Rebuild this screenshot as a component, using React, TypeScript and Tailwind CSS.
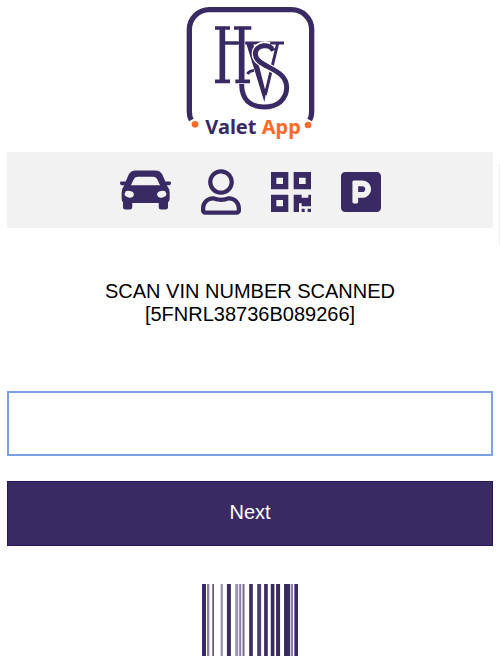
import { FaRegUser, FaParking } from "react-icons/fa";

const bars = [
  [35, 12, 1], [50, 7, 0.6], [66, 5, 0.8], [91, 7, 0.5], [110, 12, 1],
  [135, 9, 0.5], [147, 6, 0.6], [157, 6, 0.7], [177, 11, 1], [201, 12, 0.9],
  [222, 11, 1], [242, 11, 1], [258, 12, 1], [282, 18, 1], [302, 7, 0.6], [313, 11, 1],
];

function Logo() {
  return (
    <svg viewBox="0 0 420 435" className="h-[145px] w-[140px]" role="img" aria-label="HVS Valet App">
      <g fill="none" stroke="#3a2a63">
        <path strokeWidth="16" d="M34 360Q28 350 28 335V88A60 60 0 0 1 88 29H335A60 60 0 0 1 395 88V335Q395 350 389 360" />
        <path strokeWidth="9" d="M293 130L256 285" />
        <path strokeWidth="9" d="M135 129H312" />
        <path fill="#3a2a63" stroke="none" d="M198 128H219L255 268L262 258L253 306Z" />
        <path strokeWidth="8" d="M202 222Q208 212 222 211" />
        <path stroke="#fff" strokeWidth="22" d="M268 137C246 130 226 142 226 162C226 203 320 202 320 262" />
        <path strokeWidth="15" d="M280 152C270 128 226 134 226 162C226 203 320 202 320 262C320 299 292 321 252 321C210 321 185 298 185 252" />
        <path stroke="#fff" strokeWidth="21" d="M185 92V236" />
        <path strokeWidth="9" d="M135 129H190" />
        <path strokeWidth="17" d="M127 80V248M185 80V248" />
        <path strokeWidth="11" d="M105 84H150M162 84H214M105 244H150M166 244H210" />
      </g>
      <g fill="#ff6a2b">
        <circle cx="45" cy="373" r="10" />
        <circle cx="384" cy="375" r="10" />
      </g>
      <text x="76" y="401" fontFamily="'Noto Sans', sans-serif" fontWeight="700" fontSize="60" fill="#3a2a63">
        Valet <tspan fill="#ff6a2b">App</tspan>
      </text>
    </svg>
  );
}

function CarIcon() {
  return (
    <svg viewBox="0 0 154 120" className="h-10 w-[51px]" fill="currentColor" aria-hidden="true">
      <path
        fillRule="evenodd"
        d="M48 1H106Q122 1 128 14L137 34H150Q154 34 154 38Q154 46 146 46H141Q150 56 150 68V86Q150 93 145 97V112Q145 119 138 119H124Q117 119 117 112V99H37V112Q37 119 30 119H16Q9 119 9 112V97Q5 93 5 86V68Q5 56 13 46H8Q0 46 0 38Q0 34 4 34H17L26 14Q32 1 48 1ZM54 20Q46 20 42 27L33 46H121L112 27Q108 20 100 20Z"
      />
      <g fill="#f2f2f2">
        <ellipse cx="28" cy="73" rx="14" ry="10" transform="rotate(12 28 73)" />
        <ellipse cx="126" cy="73" rx="14" ry="10" transform="rotate(-12 126 73)" />
      </g>
    </svg>
  );
}

function QrIcon() {
  return (
    <svg viewBox="0 0 120 120" className="size-10" fill="currentColor" aria-hidden="true">
      <path
        fillRule="evenodd"
        d="M0 0H52V52H0ZM16 17V36H36V17ZM68 0H120V52H68ZM84 17V36H104V17ZM0 68H52V120H0ZM16 84V103H36V84ZM68 68H92V77H112V68H120V103H92V94H84V120H68ZM92 110H101V120H92ZM110 110H120V120H110Z"
      />
    </svg>
  );
}

export default function App() {
  return (
    <main className="relative flex flex-col items-stretch bg-white px-[7px] font-['Liberation_Sans',Arial,sans-serif] text-xl text-black">
      <header className="flex h-[152px] justify-center">
        <Logo />
      </header>
      <nav className="flex h-[76px] items-center justify-center gap-[30px] bg-[#f2f2f2] pt-1 text-[#3a2a63]">
        <a href="#car" aria-label="Vehicle" className="pb-1"><CarIcon /></a>
        <a href="#user" aria-label="Customer"><FaRegUser className="h-[46px] w-10" /></a>
        <a href="#scan" aria-label="Scan code"><QrIcon /></a>
        <a href="#parking" aria-label="Parking"><FaParking className="h-[46px] w-10" /></a>
      </nav>
      <form className="flex flex-col" onSubmit={(e) => e.preventDefault()}>
        <label htmlFor="vin" className="mt-[52px] text-center leading-[23px]">
          SCAN VIN NUMBER SCANNED<br />[5FNRL38736B089266]
        </label>
        <input id="vin" type="text" className="mt-[65px] h-[65px] border-2 border-[#7ba0e4] px-4 outline-none" />
        <button type="submit" className="mt-[25px] h-[65px] border border-[#28165a] bg-[#3a2a63] pb-1 text-white">Next</button>
      </form>
      <svg viewBox="35 0 289 216" preserveAspectRatio="none" className="mt-[38px] h-[72px] w-24 self-center" role="img" aria-label="Barcode">
        {bars.map(([x, w, o]) => (
          <rect key={x} x={x} y="0" width={w} height="216" fill="#3a2a63" opacity={o} />
        ))}
      </svg>
      <div className="absolute right-0 top-[163px] h-[83px] w-px bg-[#ececec]" />
    </main>
  );
}
